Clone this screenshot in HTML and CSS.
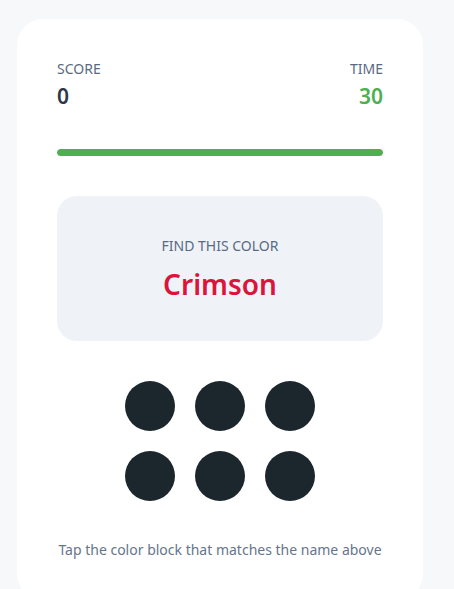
FILE: index.html
```html
<!DOCTYPE html>
<html lang="en">
<head>
<meta charset="utf-8">
<title>Color Game</title>
<link rel="stylesheet" href="styles.css">
</head>
<body>
<main class="card">
  <div class="stats">
    <div class="stat">
      <div class="stat-label">SCORE</div>
      <div class="stat-value">0</div>
    </div>
    <div class="stat stat-right">
      <div class="stat-label">TIME</div>
      <div class="stat-value time">30</div>
    </div>
  </div>
  <div class="progress"><div class="progress-fill" style="width:100%"></div></div>
  <section class="target">
    <div class="target-label">FIND THIS COLOR</div>
    <div class="target-name">Crimson</div>
  </section>
  <div class="grid">
    <button class="swatch"></button>
    <button class="swatch"></button>
    <button class="swatch"></button>
    <button class="swatch"></button>
    <button class="swatch"></button>
    <button class="swatch"></button>
  </div>
  <p class="hint">Tap the color block that matches the name above</p>
</main>
</body>
</html>
```
FILE: styles.css
```css
* { box-sizing: border-box; }
html, body { margin: 0; }
body {
  background: #f7f8fa;
  font-family: "Noto Sans", "Open Sans", sans-serif;
  padding: 19px 0 0 17px;
  min-height: 589px;
}
.card {
  width: 406px;
  background: #ffffff;
  border-radius: 26px;
  padding: 40px 40px 40px;
}
.stats {
  display: flex;
  justify-content: space-between;
}
.stat-right { text-align: right; }
.stat-label {
  font-size: 14px;
  line-height: 20px;
  color: #5a6a83;
}
.stat-value {
  font-size: 21px;
  font-weight: 600;
  line-height: 28px;
  margin-top: 3px;
  color: #2d3748;
}
.stat-value.time { color: #4caf50; }
.progress {
  margin-top: 39px;
  height: 7px;
  border-radius: 4px;
  background: #e6e9ee;
  overflow: hidden;
}
.progress-fill {
  height: 100%;
  background: #4caf50;
  border-radius: 4px;
}
.target {
  margin-top: 40px;
  background: #eff3f8;
  border-radius: 20px;
  padding: 40px 20px 38px;
  text-align: center;
}
.target-label {
  font-size: 14px;
  line-height: 20px;
  color: #5a6a83;
}
.target-name {
  margin-top: 9px;
  font-size: 28px;
  font-weight: 600;
  line-height: 38px;
  color: #dc143c;
}
.grid {
  margin-top: 40px;
  display: grid;
  grid-template-columns: repeat(3, 50px);
  gap: 20px;
  justify-content: center;
}
.swatch {
  width: 50px;
  height: 50px;
  border: 0;
  padding: 0;
  border-radius: 50%;
  background: #1b272d;
}
.hint {
  margin: 39px 0 0;
  text-align: center;
  font-size: 14px;
  line-height: 20px;
  color: #66758b;
}
```
